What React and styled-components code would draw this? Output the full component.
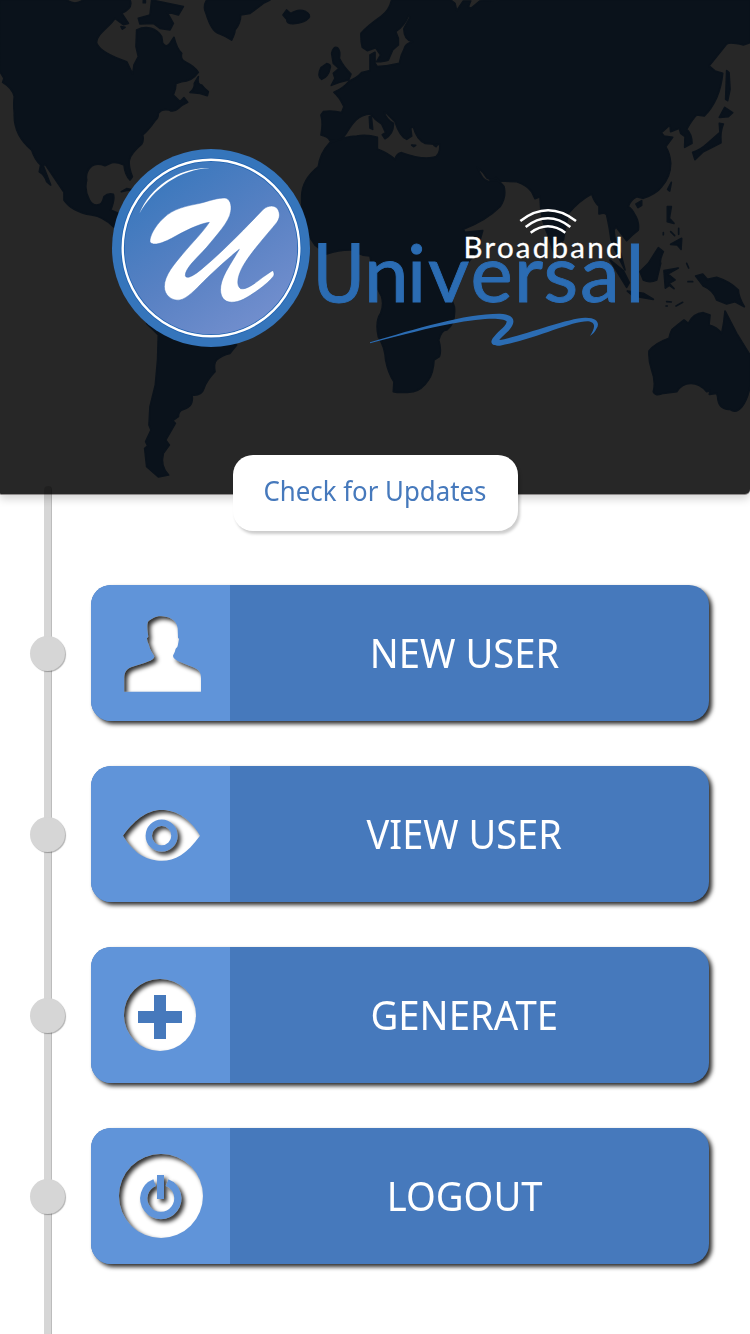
import React from "react";
import styled, { createGlobalStyle } from "styled-components";

const GlobalStyle = createGlobalStyle`
  *, *::before, *::after { box-sizing: border-box; }
  body {
    margin: 0;
    background: #fff;
    font-family: "Noto Sans", "Open Sans", sans-serif;
  }
`;

const Page = styled.div`
  width: 750px;
  height: 1334px;
  overflow: hidden;
  background: #fff;
`;

const Header = styled.header`
  display: grid;
  height: 494px;
  background: #272727;
  border-radius: 0 0 5px 1px;
  box-shadow: 0 1px 0 #8f8c8c, 0 5px 9px rgba(0, 0, 0, 0.17);
`;

const Layer = styled.svg`
  grid-area: 1 / 1;
  display: block;
  width: 750px;
  height: 494px;
`;

const UpdateButton = styled.button`
  position: relative;
  z-index: 1;
  display: flex;
  align-items: center;
  justify-content: center;
  width: 285px;
  height: 76px;
  margin: -39px auto 0 233px;
  padding: 0 1px 7px 0;
  border: 0;
  border-radius: 20px;
  background: #fff;
  box-shadow: 2px 3px 3px rgba(0, 0, 0, 0.2);
  color: #4679bc;
  font: 400 28px/1 "Noto Sans", sans-serif;
`;

const Label = styled.span`
  display: inline-block;
  white-space: nowrap;
  transform: scaleX(${(p) => p.$stretch});
`;

const Menu = styled.ul`
  position: relative;
  display: flex;
  flex-direction: column;
  gap: 45px;
  margin: 54px 0 0;
  padding: 0;
  list-style: none;

  &::before {
    content: "";
    position: absolute;
    left: 44px;
    top: -99px;
    width: 8px;
    height: 860px;
    border-radius: 4px 4px 0 0;
    border-right: 1px solid rgba(0, 0, 0, 0.12);
    background: rgba(0, 0, 0, 0.16);
  }
`;

const Row = styled.li`
  position: relative;
  display: flex;
  align-items: center;
  gap: 26px;
  padding-left: 30px;
`;

const Dot = styled.span`
  width: 35px;
  height: 35px;
  border-radius: 50%;
  background: #d6d6d6;
  box-shadow: 1px 1px 1px rgba(0, 0, 0, 0.3);
`;

const Card = styled.button`
  display: flex;
  width: 618px;
  height: 136px;
  padding: 0;
  border: 0;
  border-radius: 20px;
  overflow: hidden;
  background: #4679bc;
  box-shadow: 3px 3px 4px rgba(0, 0, 0, 0.82);
  color: #fff;
`;

const IconPanel = styled.span`
  flex: none;
  width: 139px;
  height: 136px;
  background: #6094d9;

  svg { display: block; width: 100%; height: 100%; }
`;

const CardText = styled.span`
  flex: 1;
  align-self: center;
  padding: 0 10px 0 0;
  text-align: center;
  font: 400 40.5px/56px "Noto Sans", sans-serif;
`;

const LAND = [
  "M0 0H200Q225 18 250 0H390Q400 25 365 40L385 70L370 74L345 55C330 80 285 105 290 130C300 155 350 175 380 185L398 222L402 195L415 170L408 140L410 90C440 75 470 85 485 110L488 130Q500 145 510 130L522 112Q530 145 545 160Q540 178 555 185Q585 200 595 217Q575 245 545 245L528 250Q528 265 520 285L540 305L552 293L563 307Q545 315 535 325Q520 338 508 330Q485 325 475 340Q475 355 465 362Q445 390 428 405Q432 420 425 432Q392 460 388 480Q385 500 397 530L390 540Q375 525 372 495Q350 485 335 488L315 497Q290 488 275 498Q255 515 260 540Q252 570 268 600Q280 622 300 613Q308 608 312 590Q325 578 340 583Q345 600 332 630L360 642L400 720L340 680Q310 650 275 645Q215 635 192 600V577L135 492L130 498L152 555L140 545Q135 525 118 515L122 495Q105 480 95 450Q40 405 43 340Q40 310 43 290Q38 265 8 247L12 235L0 215Z",
  "M455 0L550 20L535 45L500 35L520 70L510 90L480 85L460 70L420 72L415 55L450 45Z",
  "M595 230Q590 255 605 255Q615 268 625 275L622 287L600 280L570 277Q585 265 583 250Z",
  "M430 2h6v6h-6zM363 80l12 2l-8 5zM364 575L380 566L400 570L380 571Z",
  "M620 0Q608 20 618 40Q635 95 655 100Q680 110 695 120Q705 100 705 90Q722 70 722 45L750 40L790 10L810 0Z",
  "M849 45L860 30L872 41Q895 25 915 34Q935 45 925 55Q915 68 880 71Q860 72 860 58Z",
  "M995 160Q1000 138 1012 143Q1022 152 1018 175Q1030 200 1053 222L1046 240Q1020 245 994 256L1005 235L1000 220L1017 205L1000 190Z",
  "M980 191Q995 193 990 205Q985 230 965 238Q950 228 963 203Z",
  "M1175 0Q1168 30 1145 48Q1100 80 1083 100Q1082 125 1087 142L1102 152L1127 143L1142 165L1130 185Q1155 185 1165 180L1178 150L1195 135V115L1187 95Q1215 75 1225 47L1230 52L1212 85Q1210 118 1238 126Q1215 130 1212 148Q1202 165 1198 190Q1165 198 1132 200L1125 190V157L1110 165V212L1085 218Q1070 235 1048 243Q1030 265 1002 277Q1018 290 1032 320L1025 338Q995 330 970 335L963 345Q970 370 963 405Q985 410 990 422L1020 420C1045 410 1050 345 1112 342Q1125 360 1145 372L1157 398L1147 404L1155 416Q1182 400 1180 370Q1160 360 1152 337L1160 340L1185 365Q1200 410 1220 418L1235 408L1232 385L1240 380Q1250 418 1275 430L1320 434Q1320 470 1300 472Q1265 480 1205 458Q1190 460 1185 478Q1165 460 1132 447V412Q1100 402 1070 408Q1035 410 1010 422L990 428Q960 460 955 500Q905 540 905 590V640L915 690L945 735L980 762Q1020 748 1060 750Q1080 768 1110 768L1113 785L1125 850L1145 890Q1152 915 1142 940Q1125 965 1135 1010Q1155 1040 1157 1080Q1165 1120 1182 1145L1180 1175Q1200 1180 1240 1175Q1265 1170 1285 1140Q1300 1120 1302 1080L1318 1070Q1325 1050 1316 1020Q1325 990 1340 990Q1368 970 1363 920L1352 890L1370 830L1430 755L1448 692L1395 697L1390 688Q1460 660 1500 620Q1520 590 1512 560L1488 533L1465 545Q1445 540 1432 502Q1450 515 1460 533Q1480 545 1500 543L1550 545Q1580 555 1595 575L1605 596L1620 590Q1622 660 1642 700L1662 760Q1670 735 1690 720L1705 640Q1740 600 1775 582Q1785 610 1797 618V642Q1815 635 1820 645Q1830 690 1833 720L1845 750L1875 810L1862 760Q1845 735 1842 690L1848 680L1880 722Q1895 705 1915 690Q1918 665 1905 645Q1895 625 1885 620Q1890 600 1910 590L1930 595Q1970 580 1985 560Q2012 530 2012 490Q2010 460 1997 440L2018 412L1992 408L1984 398L2010 375L2012 395L2038 385L2042 400L2055 410L2054 442L2076 430Q2075 400 2060 388Q2075 360 2090 345L2113 348Q2160 300 2168 220L2145 213L2127 198L2180 132Q2190 125 2230 135L2250 128V0H1500L1440 3L1412 26L1405 20L1412 3H1390L1370 32L1365 10L1352 0Z",
  "M1108 350l6-2l4 40l-8-4zM1235 435l12 1l-6 4zM1302 436l10-2l-4 6z",
  "M475 1005Q475 1080 466 1155L450 1220L447 1275L453 1290L437 1325L443 1338L434 1345L440 1400L475 1431L506 1425Q480 1400 490 1360L508 1335L497 1320L526 1270L518 1262L535 1250Q535 1232 550 1228Q582 1220 576 1185Q605 1188 612 1165Q620 1140 645 1115Q640 1090 650 1080Q665 1065 690 1060L710 1035L600 980L440 970Z",
  "M2175 933L2210 1000L2250 1065V1160C2240 1210 2215 1248 2190 1228Q2155 1230 2153 1190L2150 1180L2128 1183L2130 1172L2120 1175C2090 1140 2050 1145 2030 1175L1990 1180Q1965 1190 1960 1175Q1968 1145 1955 1110Q1945 1080 1947 1053Q1965 1030 2007 1015Q2012 990 2020 985L2052 960L2065 970Q2080 940 2110 938L2130 945L2127 975Q2150 980 2165 1000Q2172 970 2175 933Z",
  "M2087 828L2108 822L2122 838L2150 832Q2190 845 2215 870Q2215 890 2233 920L2205 905L2180 912L2150 900Q2140 870 2110 858Z",
  "M1920 815L1945 790L1975 743L1990 755Q1978 780 1982 790L1970 840Q1950 850 1930 840Z",
  "M1992 812L2035 804L2003 822L2025 840L2007 850L2022 866L2008 856L1996 864Z",
  "M2002 620L2014 620L2008 655L2022 670L2002 665ZM2012 733L2045 715L2043 748L2032 735ZM2012 695l12 12M1990 698v6M2036 685v18",
  "M1882 873L1930 880L1960 898L1900 888ZM2000 905l14 1M2028 918l20-11M1998 918h4M2064 845h14M2060 790l6 14",
  "M1830 780L1870 812L1888 848L1880 862Z",
  "M2078 457Q2100 450 2120 432L2160 397L2158 370L2170 372Q2160 395 2163 428Q2140 440 2110 455L2085 479Z",
  "M2158 352L2174 322L2198 338L2185 350ZM2180 212L2187 218L2190 268L2183 302L2177 298ZM2003 568L2014 547L2009 573ZM1908 612L1925 602V616L1914 623Z",
];

function WorldMap() {
  return (
    <Layer viewBox="0 0 2250 1482" aria-hidden="true">
      <g fill="#0a121b" stroke="#0a121b" strokeWidth="5" strokeLinejoin="round" strokeLinecap="round">
        {LAND.map((d) => (
          <path key={d} d={d} />
        ))}
      </g>
    </Layer>
  );
}

function Logo() {
  return (
    <Layer viewBox="0 0 750 494" role="img" aria-label="Universal Broadband">
      <defs>
        <linearGradient id="badge" x1="0.2" y1="0.1" x2="0.8" y2="0.95">
          <stop offset="0" stopColor="#3b78bd" />
          <stop offset="0.5" stopColor="#5881c3" />
          <stop offset="1" stopColor="#738fce" />
        </linearGradient>
      </defs>
      <circle cx="211" cy="248" r="99" fill="#3575bb" />
      <circle cx="211" cy="248" r="88.3" fill="url(#badge)" stroke="#1f62b0" strokeWidth="4" />
      <circle cx="211" cy="248" r="88.3" fill="none" stroke="#fff" strokeWidth="2.4" />
      <g transform="translate(100 140) scale(.33333)">
        <path fill="#fff" d="M118 221C150 140 240 80 330 84C240 88 160 145 118 221Z" />
        <path
          fill="#fff"
          stroke="#3f70b8"
          strokeWidth="1.5"
          d="M150 306C148 290 165 258 190 235C220 205 260 198 300 190C330 182 355 173 375 174C390 176 396 195 392 215C388 245 350 285 320 322C290 355 255 385 256 407C260 420 285 405 310 383C350 350 390 310 430 270L490 208C505 195 525 195 533 207C541 220 540 235 530 248C500 285 450 340 428 380C412 410 408 437 422 446C440 450 465 430 488 412L517 392C523 395 523 402 521 408C500 435 455 465 430 478C405 490 380 490 369 475C355 455 362 425 378 395C392 370 405 350 418 328C390 350 340 395 310 425C285 450 262 475 240 480C215 484 193 465 193 440C193 405 225 370 250 340C275 310 310 275 328 247C300 250 250 275 215 295C190 308 160 320 150 306Z"
        />
      </g>
      <text
        x="312.5 364 407 428 470.5 514 543.5 580 625.5"
        y="302"
        fill="#2b6cb3"
        stroke="#2b6cb3"
        strokeWidth="0.9"
        fontFamily="Lato, sans-serif"
        fontSize="80"
      >
        <tspan fontFamily="'DejaVu Sans Condensed', 'Liberation Sans Narrow', sans-serif">U</tspan>
        niversal
      </text>
      <text
        x="463.5"
        y="257.5"
        fill="#fff"
        stroke="#fff"
        strokeWidth="0.3"
        fontFamily="Lato, sans-serif"
        fontSize="29.5"
        textLength="159"
      >
        Broadband
      </text>
      <g transform="scale(.33333)">
        <g fill="none" stroke="#fff" strokeWidth="7.5">
          <path d="M1561 663Q1644 599 1728 663" />
          <path d="M1577 681Q1644 629 1711 681" />
          <path d="M1592 698Q1644 660 1696 698" />
        </g>
        <path
          fill="#2b6cb3"
          d="M1110 1027C1250 985 1400 940 1500 941C1545 943 1548 965 1530 987C1517 1003 1503 1012 1498 1020C1560 1010 1700 955 1755 953C1792 952 1800 970 1790 985C1784 997 1778 1003 1770 1008C1784 985 1790 968 1765 964C1715 962 1600 1020 1500 1037C1472 1040 1468 1025 1482 1010C1498 990 1520 978 1520 964C1500 948 1400 950 1110 1030Z"
        />
      </g>
    </Layer>
  );
}

function CutoutIcon({ id, top, children, mask, over }) {
  return (
    <svg viewBox={`213 ${top} 417 408`} aria-hidden="true">
      <defs>
        <filter id={`inset-${id}`} x="-20%" y="-20%" width="140%" height="140%" colorInterpolationFilters="sRGB">
          <feFlood floodColor="#000" floodOpacity="0.82" />
          <feComposite in2="SourceAlpha" operator="out" />
          <feOffset dx="8" dy="9" />
          <feGaussianBlur stdDeviation="6" />
          <feComposite in2="SourceAlpha" operator="in" result="shade" />
          <feMerge>
            <feMergeNode in="SourceGraphic" />
            <feMergeNode in="shade" />
          </feMerge>
        </filter>
        {mask && (
          <mask id={`mask-${id}`} maskUnits="userSpaceOnUse" x="213" y={top} width="417" height="408">
            <rect x="213" y={top} width="417" height="408" fill="#fff" />
            {mask}
          </mask>
        )}
      </defs>
      <g filter={`url(#inset-${id})`}>
        <g fill="#fff" mask={mask ? `url(#mask-${id})` : undefined}>
          {children}
        </g>
      </g>
      {over}
    </svg>
  );
}

const UserIcon = () => (
  <CutoutIcon id="user" top={45}>
    <path d="M313 365V322C313 302 325 293 345 288C370 279 405 272 403 258C398 250 390 240 387 225L383 215L381 205L385 200C382 180 380 155 387 152C395 147 400 142 410 140C435 135 470 145 473 175L474 203L477 207L473 228C471 234 468 233 466 239C464 250 460 252 459 258C460 272 495 282 515 290C535 298 543 305 543 325V365Z" />
  </CutoutIcon>
);

const EyeIcon = () => (
  <CutoutIcon
    id="eye"
    top={48}
    mask={<circle cx="425" cy="257" r="38.5" fill="none" stroke="#000" strokeWidth="19.5" />}
  >
    <path d="M309 257C350 200 390 180 425 180C460 180 503 197 540 257C500 312 465 332 425 332C385 332 345 315 309 257Z" />
  </CutoutIcon>
);

const PlusIcon = () => (
  <CutoutIcon
    id="plus"
    top={51}
    over={<path fill="#4679bc" d="M402 195h36v48h48v36h-48v48h-36v-48h-48v-36h48z" />}
  >
    <circle cx="420" cy="255" r="108" />
  </CutoutIcon>
);

const PowerIcon = () => (
  <CutoutIcon
    id="power"
    top={54}
    mask={
      <>
        <path d="M404 218A51 51 0 1 0 441 218" fill="none" stroke="#000" strokeWidth="22" />
        <rect x="411" y="195" width="21" height="72" />
      </>
    }
  >
    <circle cx="423" cy="258" r="126" />
  </CutoutIcon>
);

const ITEMS = [
  { label: "NEW USER", Icon: UserIcon, stretch: 0.942 },
  { label: "VIEW USER", Icon: EyeIcon, stretch: 0.937 },
  { label: "GENERATE", Icon: PlusIcon, stretch: 0.945 },
  { label: "LOGOUT", Icon: PowerIcon, stretch: 0.942 },
];

export default function App() {
  return (
    <Page>
      <GlobalStyle />
      <Header>
        <WorldMap />
        <Logo />
      </Header>
      <UpdateButton type="button">
        <Label $stretch={0.922}>Check for Updates</Label>
      </UpdateButton>
      <Menu>
        {ITEMS.map(({ label, Icon, stretch }) => (
          <Row key={label}>
            <Dot />
            <Card type="button">
              <IconPanel>
                <Icon />
              </IconPanel>
              <CardText>
                <Label $stretch={stretch}>{label}</Label>
              </CardText>
            </Card>
          </Row>
        ))}
      </Menu>
    </Page>
  );
}
